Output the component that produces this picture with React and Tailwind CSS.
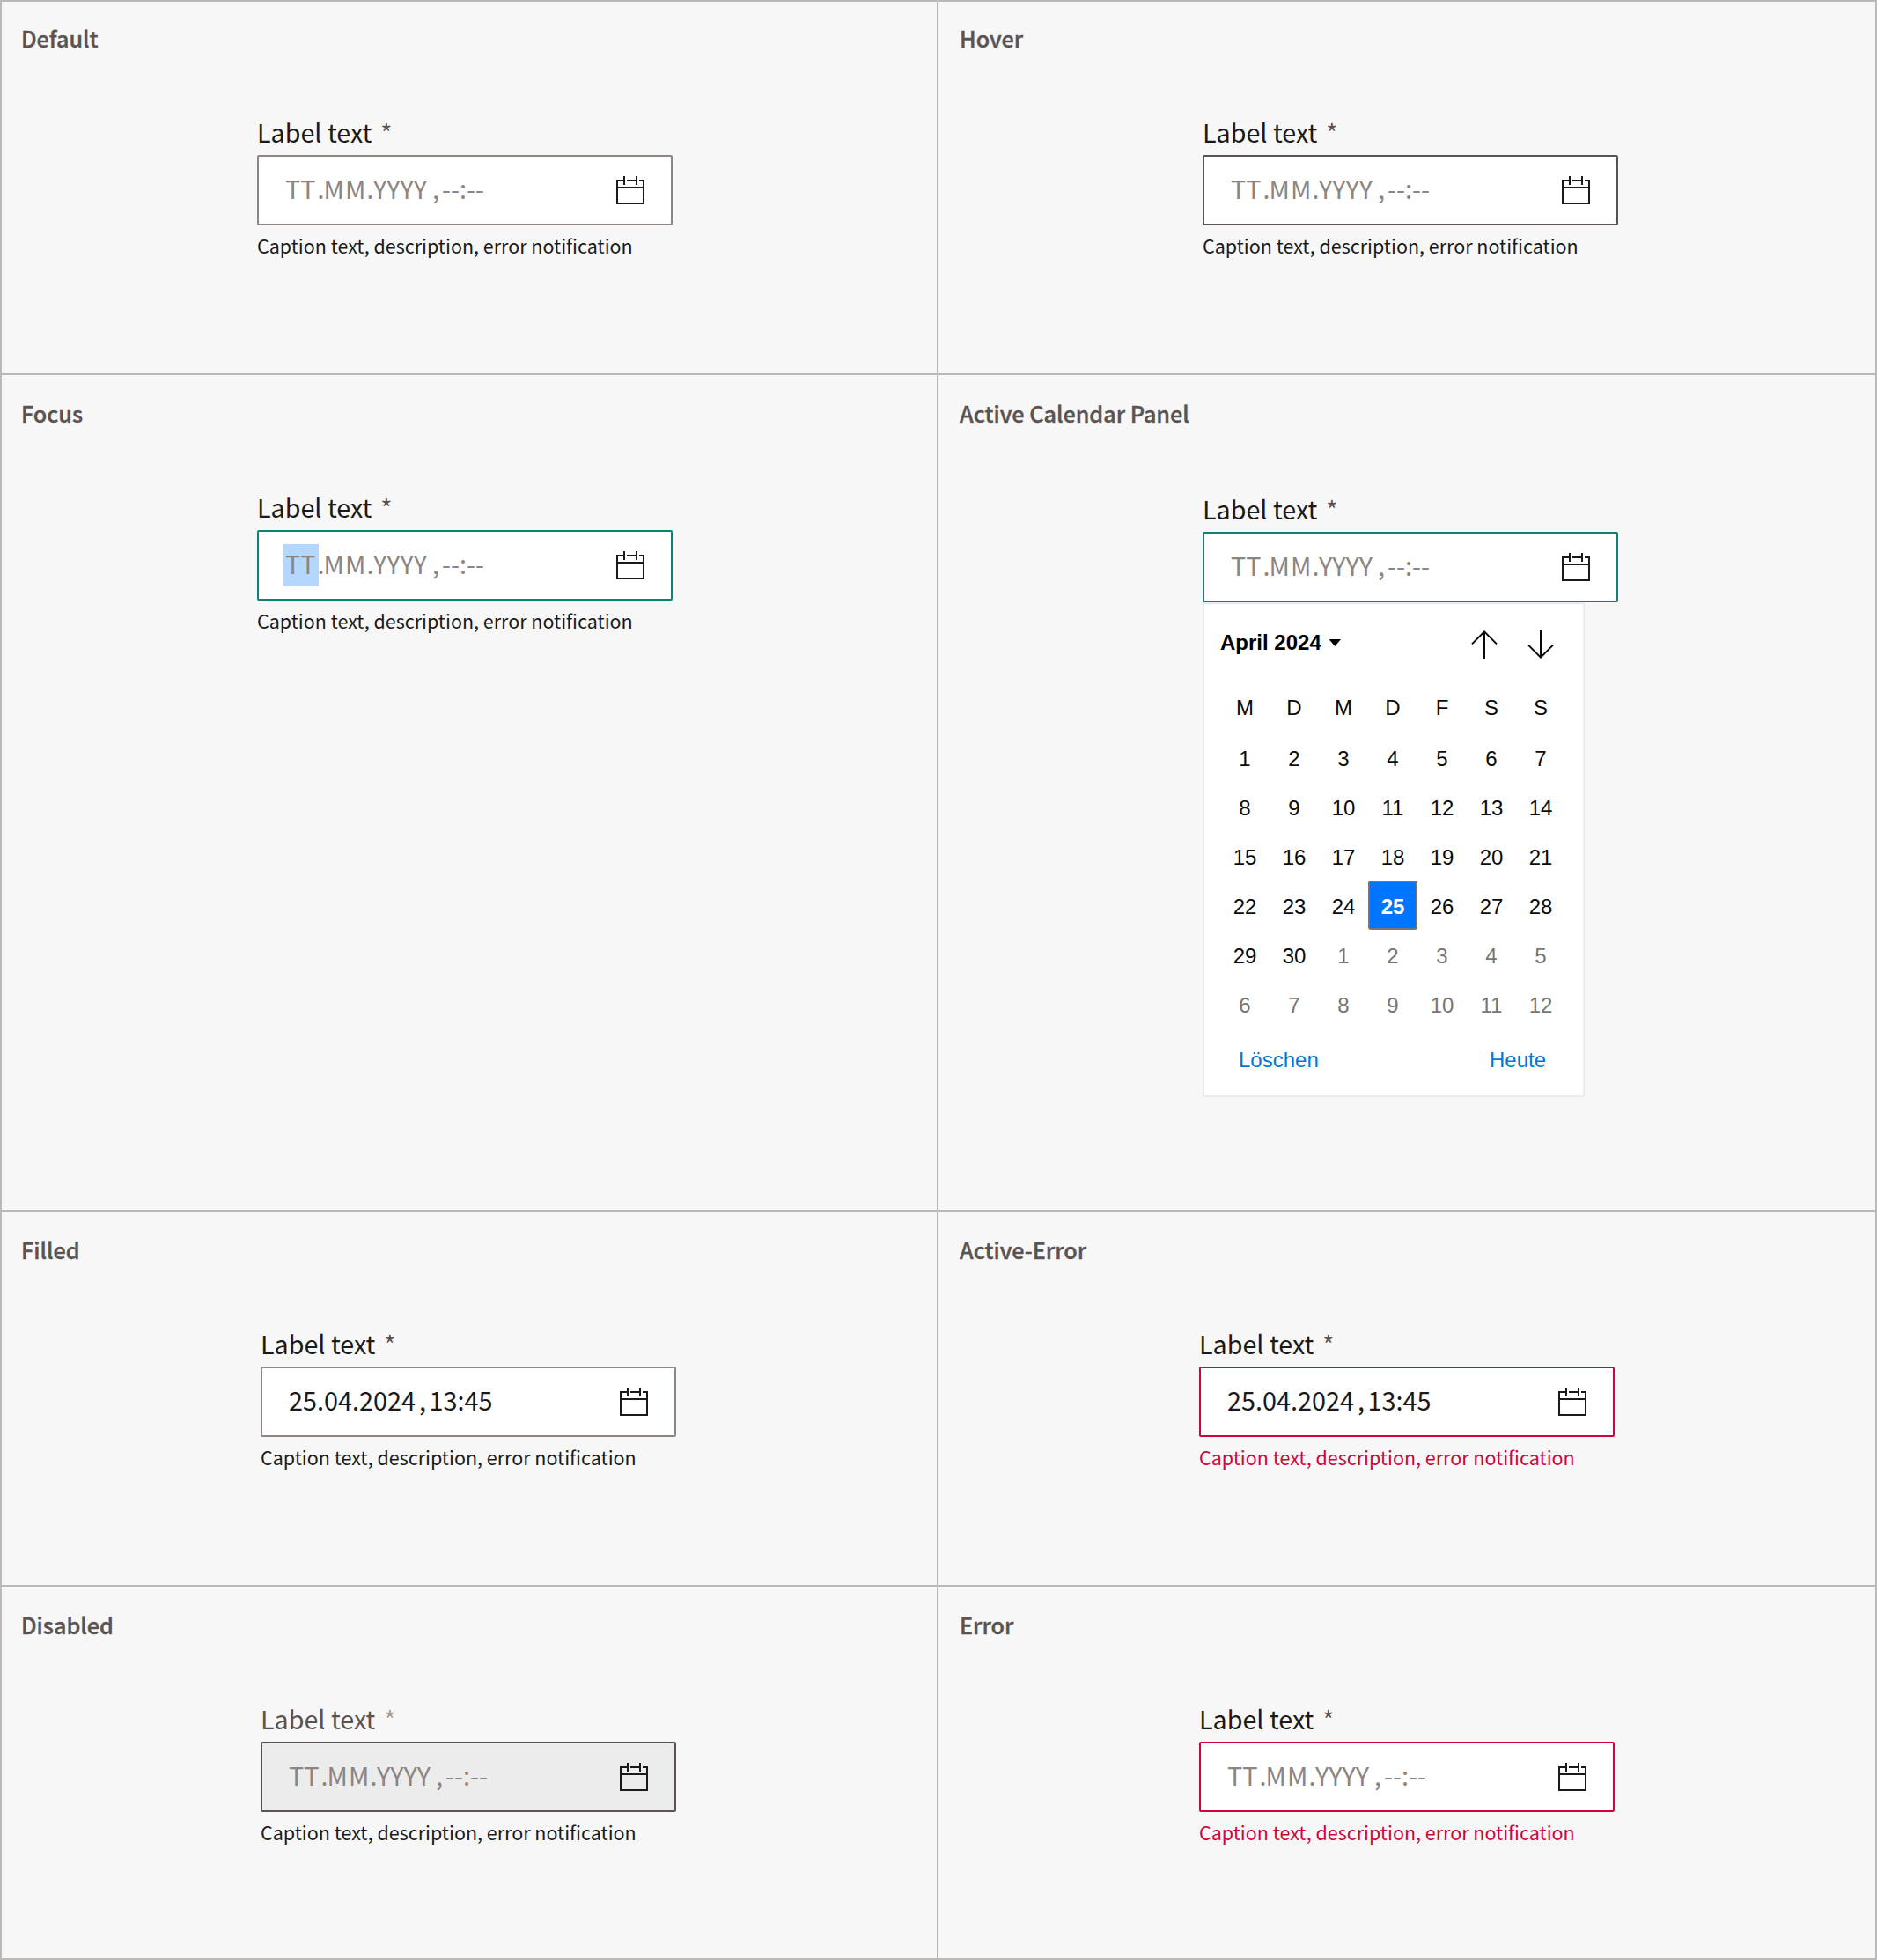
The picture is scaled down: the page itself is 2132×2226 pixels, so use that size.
const latin = "font-['Noto_Sans_CJK_SC','Source_Sans_Pro',sans-serif]";

const tones = {
  gray: 'border-[#8c8582]',
  dark: 'border-[#5a5352]',
  teal: 'border-[#0a8276]',
  red: 'border-[#d0043c]',
};

function CalendarIcon() {
  return (
    <svg width="32" height="32" viewBox="0 0 32 32" fill="none" stroke="#1a1a1a" strokeWidth="2" className="block">
      <path d="M9 5H1V31H31V5H26M12 5H23M9 0V10M23 0V10M1 13H31" />
    </svg>
  );
}

function Seg({ w, children, className = '' }) {
  return (
    <span className={'flex h-12 shrink-0 items-center pb-[4px] whitespace-pre ' + w + ' ' + className}>{children}</span>
  );
}

function Field({ tone = 'gray', filled, selected, disabled, error, caption = true }) {
  return (
    <div className="flex w-[472px] flex-col">
      <div className="flex h-12 gap-[10px]">
        <span className={'text-[28.7px] leading-[43px] ' + (disabled ? 'text-[#5a5352]' : 'text-[#1a1a1a]')}>Label text</span>
        <span className={'text-[28.3px] leading-[43px] ' + (disabled ? 'text-[#a09b99]' : 'text-[#5a5352]')}>*</span>
      </div>
      <div className={'flex h-20 items-center justify-between rounded-[2px] border-2 pr-[30px] pl-[28px] text-[28.8px] leading-[48px] ' + tones[tone] + (disabled ? ' bg-[#ececec]' : ' bg-white') + (filled ? ' text-[#1a1a1a]' : ' text-[#8c8582]')}>
        {filled ? (
          <div className="flex">
            <Seg w="w-[150px]" className="pl-[2px]">25.04.2024</Seg>
            <Seg w="w-[11.5px]">,</Seg>
            <Seg w="w-[80px]">13:45</Seg>
          </div>
        ) : (
          <div className="flex">
            <Seg w="w-[40px]" className={'pl-[2px]' + (selected ? ' bg-[#b3d7ff]' : '')}>TT</Seg>
            <Seg w="w-[5.5px]"><span className="-ml-[1.5px]">.</span></Seg>
            <Seg w="w-[49px]" className="tracking-[1px]">MM</Seg>
            <Seg w="w-[7.5px]">.</Seg>
            <Seg w="w-[67px]">YYYY</Seg>
            <Seg w="w-[11px]">,</Seg>
            <Seg w="w-[20px]">--</Seg>
            <Seg w="w-[8px]">:</Seg>
            <Seg w="w-[20px]">--</Seg>
          </div>
        )}
        <CalendarIcon />
      </div>
      {caption && (
        <span className={'mt-[7px] text-[21.5px] leading-8 whitespace-nowrap ' + (error ? 'text-[#d0043c]' : 'text-[#1a1a1a]')}>
          Caption text, description, error notification
        </span>
      )}
    </div>
  );
}

const weekdays = ['M', 'D', 'M', 'D', 'F', 'S', 'S'];
const days = Array.from({ length: 42 }, (_, i) => ({ n: i < 30 ? i + 1 : i - 29, next: i >= 30 }));

function CalendarPanel() {
  return (
    <div className="flex h-[562px] w-[434px] flex-col border-2 border-[#ebebeb] bg-white pr-5 pl-[18px] font-['Liberation_Sans',Arial,sans-serif] text-[24px] leading-[28px] text-[#0a0a0a]">
      <div className="mt-[28px] flex h-[36px] items-center justify-between pr-[12px]">
        <div className="mb-[4px] flex items-center gap-[8px]">
          <span className="font-bold text-black">April 2024</span>
          <svg width="15" height="8" viewBox="0 0 15 8" className="block"><path d="M0.5 0H14L7.25 8Z" fill="#000" /></svg>
        </div>
        <div className="flex gap-[32px]">
          <svg width="32" height="32" viewBox="0 0 32 32" fill="none" stroke="#0a0a0a" strokeWidth="2"><path d="M16 32V1.5M2 15.4L16 1.4L30 15.4" /></svg>
          <svg width="32" height="32" viewBox="0 0 32 32" fill="none" stroke="#0a0a0a" strokeWidth="2"><path d="M16 0V30.5M2 16.6L16 30.6L30 16.6" /></svg>
        </div>
      </div>
      <div className="mt-[26px] grid grid-cols-7">
        {weekdays.map((d, i) => (
          <div key={i} className="flex h-[54px] items-center justify-center pt-[2px]">{d}</div>
        ))}
      </div>
      <div className="mt-[2px] grid grid-cols-7">
        {days.map((d, i) => (
          <div
            key={i}
            className={
              'flex h-[56px] items-center justify-center pt-[4px] ' +
              (i === 24 ? 'rounded-[3px] border-2 border-[#767676] bg-[#0075ff] font-bold text-white' : d.next ? 'text-[#767676]' : '')
            }
          >
            {d.n}
          </div>
        ))}
      </div>
      <div className="mt-[22px] flex justify-between pr-[22px] pl-[21px] text-[#0078d7]">
        <span>Löschen</span>
        <span>Heute</span>
      </div>
    </div>
  );
}

function Cell({ title, size = 'h-[86px] pl-[22px]', indent, children }) {
  return (
    <section className="flex flex-col border-r-2 border-b-2 border-[#bcb8b7]">
      <h2 className={'flex items-center text-[25.2px] leading-[36px] font-medium text-[#5a5352] [-webkit-text-stroke:0.4px_#5a5352] ' + size}>{title}</h2>
      <div className={indent}>{children}</div>
    </section>
  );
}

export default function App() {
  return (
    <main className={'grid h-[2226px] w-[2132px] grid-cols-[1064px_1066px] grid-rows-[424px_950px_426px_424px] border-t-2 border-l-2 border-[#bcb8b7] bg-[#f7f7f7] ' + latin}>
      <Cell title="Default" size="h-[82px] pl-[22px]" indent="pt-[44px] pl-[290px]"><Field /></Cell>
      <Cell title="Hover" size="h-[82px] pl-[24px]" indent="pt-[44px] pl-[300px]"><Field tone="dark" /></Cell>
      <Cell title="Focus" indent="pt-[42px] pl-[290px]"><Field tone="teal" selected /></Cell>
      <Cell title="Active Calendar Panel" size="h-[86px] pl-[24px]" indent="pt-[44px] pl-[300px]">
        <Field tone="teal" caption={false} />
        <CalendarPanel />
      </Cell>
      <Cell title="Filled" indent="pt-[42px] pl-[294px]"><Field filled /></Cell>
      <Cell title="Active-Error" size="h-[86px] pl-[24px]" indent="pt-[42px] pl-[296px]"><Field tone="red" filled error /></Cell>
      <Cell title="Disabled" indent="pt-[42px] pl-[294px]"><Field tone="dark" disabled /></Cell>
      <Cell title="Error" size="h-[86px] pl-[24px]" indent="pt-[42px] pl-[296px]"><Field tone="red" error /></Cell>
    </main>
  );
}
